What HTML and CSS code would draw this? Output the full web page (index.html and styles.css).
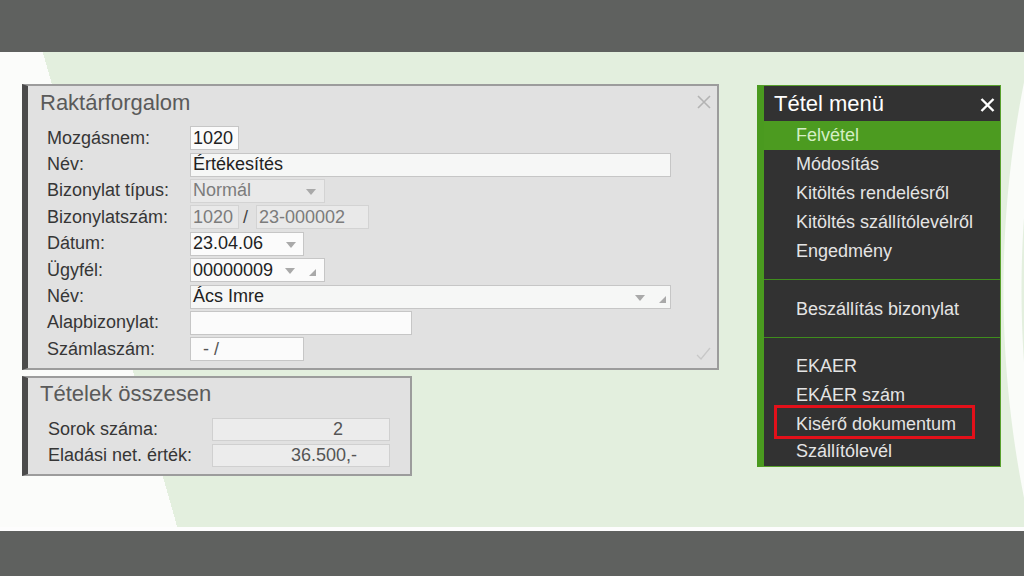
FILE: index.html
```html
<!DOCTYPE html>
<html lang="hu">
<head>
    <meta charset="UTF-8">
    <meta name="viewport" content="width=device-width, initial-scale=1.0">
    <link rel="stylesheet" href="styles.css">
    <title>Raktárforgalom</title>
</head>
<body>
  <div class="topbar"></div>

  <main class="stage">
    <div class="forms">

      <section class="panel panelMain">
        <div class="panelHead">
          <h1 class="panelTitle">Raktárforgalom</h1>
          <svg class="panelClose" width="14" height="14" viewBox="0 0 14 14">
            <path d="M1 1 L13 13 M13 1 L1 13" stroke="#b3b3b3" stroke-width="1.6" fill="none"/>
          </svg>
        </div>
        <div class="rows">
          <div class="row">
            <label>Mozgásnem:</label>
            <div class="field plain w49"><span class="val">1020</span></div>
          </div>
          <div class="row">
            <label>Név:</label>
            <div class="field w481"><span class="val">Értékesítés</span></div>
          </div>
          <div class="row">
            <label>Bizonylat típus:</label>
            <div class="field disabled w135"><span class="val">Normál</span><span class="arrow a8"></span></div>
          </div>
          <div class="row">
            <label>Bizonylatszám:</label>
            <div class="pair">
              <div class="field disabled w49"><span class="val">1020</span></div>
              <span class="slash">/</span>
              <div class="field disabled w113"><span class="val">23-000002</span></div>
            </div>
          </div>
          <div class="row">
            <label>Dátum:</label>
            <div class="field plain w114"><span class="val">23.04.06</span><span class="arrow a7"></span></div>
          </div>
          <div class="row">
            <label>Ügyfél:</label>
            <div class="field plain w135"><span class="val">00000009</span><span class="arrow"></span><span class="corner c8"></span></div>
          </div>
          <div class="row">
            <label>Név:</label>
            <div class="field w481"><span class="val">Ács Imre</span><span class="arrow"></span><span class="corner c4"></span></div>
          </div>
          <div class="row">
            <label>Alapbizonylat:</label>
            <div class="field plain w222"><span class="val"></span></div>
          </div>
          <div class="row">
            <label>Számlaszám:</label>
            <div class="lastCell">
              <div class="field plain w114"><span class="val dashes">- /</span></div>
              <svg class="check" width="15" height="13" viewBox="0 0 15 13">
                <path d="M1 8 L5 12 L14 1" stroke="#c8c8c8" stroke-width="1.3" fill="none"/>
              </svg>
            </div>
          </div>
        </div>
      </section>

      <section class="panel panelSum">
        <h2 class="panelTitle sumTitle">Tételek összesen</h2>
        <div class="rows">
          <div class="row sumRow">
            <label>Sorok száma:</label>
            <div class="field total w178"><span class="val num1">2</span></div>
          </div>
          <div class="row sumRow">
            <label>Eladási net. érték:</label>
            <div class="field total w178"><span class="val num2">36.500,-</span></div>
          </div>
        </div>
      </section>

    </div>

    <nav class="menu">
      <div class="menuHead">
        <span class="menuTitle">Tétel menü</span>
        <svg class="menuClose" width="15" height="14" viewBox="0 0 15 14">
          <path d="M1.5 1 L13.5 13 M13.5 1 L1.5 13" stroke="#ffffff" stroke-width="2.4" fill="none"/>
        </svg>
      </div>
      <ul class="menuGroup first">
        <li class="active">Felvétel</li>
        <li>Módosítás</li>
        <li>Kitöltés rendelésről</li>
        <li>Kitöltés szállítólevélről</li>
        <li>Engedmény</li>
      </ul>
      <ul class="menuGroup">
        <li>Beszállítás bizonylat</li>
      </ul>
      <ul class="menuGroup last">
        <li>EKAER</li>
        <li>EKÁER szám</li>
        <li class="marked"><span class="markBox">Kisérő dokumentum</span></li>
        <li>Szállítólevél</li>
      </ul>
    </nav>
  </main>

  <div class="strip"></div>
  <div class="bottombar"></div>
</body>
</html>
```

FILE: styles.css
```css
body {
  margin: 0;
  width: 1024px;
  height: 576px;
  overflow: hidden;
  font-family: "Liberation Sans", Arial, Helvetica, sans-serif;
  background-color: #fdfdfd;
}

.topbar, .bottombar {
  background-color: #5f615f;
}
.topbar { height: 52px; }
.bottombar { height: 45px; }
.strip { height: 4px; background-color: #fdfdfd; }

.stage {
  height: 475px;
  box-sizing: border-box;
  padding-top: 32px;
  display: flex;
  align-items: flex-start;
  background:
    radial-gradient(circle at 2066px 238px, transparent 1044px, #fafcf9 1045px, #fafcf9 1062px, transparent 1063px),
    linear-gradient(74.2deg, #fbfcfa 170.5px, #e3efde 170.5px);
}

/* ---- left form panels ---- */
.forms {
  margin-left: 22px;
}

.panel {
  box-sizing: border-box;
  background-color: #e1e1e1;
  border: 2px solid #9c9c9c;
  border-left: 6px solid #4b4b4b;
  color: #333;
}

.panelMain {
  width: 697px;
  padding-bottom: 5px;
}

.panelHead {
  display: flex;
  justify-content: space-between;
  align-items: center;
  height: 34px;
}

.panelTitle {
  margin: 0;
  padding-left: 12px;
  font-size: 22px;
  font-weight: normal;
  color: #5a5a5a;
  line-height: 34px;
}

.panelClose {
  margin-right: 6px;
  margin-top: -2px;
}

.panelMain .rows {
  margin-top: 5px;
}

.row {
  display: grid;
  grid-template-columns: 143px 1fr;
  align-items: center;
  height: 26.4px;
  padding-left: 19px;
}

.row label {
  font-size: 18px;
  color: #363636;
  white-space: nowrap;
}

.field {
  box-sizing: border-box;
  height: 24px;
  border: 1px solid #c6c6c6;
  background-color: #f6f7f6;
  display: flex;
  align-items: center;
  padding-left: 2px;
  font-size: 18px;
  color: #222;
}
.field .val {
  flex: 1;
  white-space: nowrap;
}
.field.plain { background-color: #fbfbfb; }
.field.disabled {
  background-color: #e9e9e9;
  border-color: #d3d3d3;
  color: #7c7c7c;
}

.w49 { width: 49px; }
.w113 { width: 113px; }
.w114 { width: 114px; }
.w135 { width: 135px; }
.w178 { width: 178px; }
.w222 { width: 222px; }
.w481 { width: 481px; }

.arrow {
  width: 0;
  height: 0;
  border-left: 5px solid transparent;
  border-right: 5px solid transparent;
  border-top: 6px solid #a9a9a9;
  margin-top: 2px;
}
.arrow.a7 { margin-right: 7px; }
.arrow.a8 { margin-right: 8px; }

.corner {
  width: 0;
  height: 0;
  border-left: 7px solid transparent;
  border-bottom: 7px solid #a9a9a9;
  align-self: flex-end;
  margin-bottom: 5px;
  margin-left: 14px;
}
.corner.c8 { margin-right: 8px; }
.corner.c4 { margin-right: 4px; }

.pair {
  display: flex;
  align-items: center;
}
.slash {
  font-size: 18px;
  color: #444;
  margin: 0 8px 0 4px;
}

.dashes {
  padding-left: 10px;
  color: #555;
}

.lastCell {
  display: flex;
  align-items: center;
}
.check {
  margin-left: auto;
  margin-right: 6px;
  margin-top: 8px;
}

.panelSum {
  width: 390px;
  margin-top: 6px;
  padding-bottom: 5px;
}
.sumTitle {
  line-height: 32px;
}
.panelSum .rows {
  margin-top: 7px;
}
.sumRow {
  grid-template-columns: 164px 1fr;
  height: 26px;
  padding-left: 20px;
}
.field.total {
  height: 23px;
  background-color: #ececec;
  border-color: #d0d0d0;
  color: #555;
  text-align: right;
}
.num1 { padding-right: 46px; }
.num2 { padding-right: 32px; }

/* ---- right menu ---- */
.menu {
  box-sizing: border-box;
  width: 244px;
  margin-left: 38px;
  margin-top: 1px;
  background-color: #323232;
  border: 1px solid #58a02c;
  border-left: 7px solid #4a9a1f;
  color: #e4e4e4;
}

.menuHead {
  display: flex;
  justify-content: space-between;
  align-items: center;
  height: 35px;
  padding-left: 10px;
}
.menuTitle {
  font-size: 22px;
  color: #fff;
}
.menuClose {
  margin-right: 5px;
  margin-top: 2px;
}

.menuGroup {
  list-style: none;
  margin: 0;
  padding: 15px 0 13px 0;
  border-bottom: 1px solid #3f8d1d;
}
.menuGroup.first { padding-top: 0; }
.menuGroup.last { padding-top: 14px; padding-bottom: 0; border-bottom: none; }

.menuGroup li {
  height: 29px;
  line-height: 29px;
  padding-left: 32px;
  font-size: 18px;
  white-space: nowrap;
}

.menuGroup li.active {
  background-color: #4c9b20;
  color: #d4eec4;
}

.menuGroup li.marked {
  padding-left: 13px;
}
.markBox {
  display: block;
  width: 195px;
  height: 28px;
  margin-top: -2px;
  line-height: 32px;
  box-sizing: border-box;
  padding-left: 19px;
  outline: 3px solid #e3101a;
}
```
